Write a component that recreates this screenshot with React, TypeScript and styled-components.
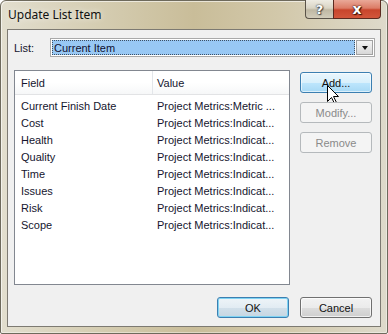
import React from 'react';
import styled, { createGlobalStyle, css } from 'styled-components';

const GlobalStyle = createGlobalStyle`
  * { box-sizing: border-box; }
  body {
    margin: 0;
    background: #ffffff;
    font-family: "Liberation Sans", Arial, sans-serif;
  }
`;

const uiFont = `"Liberation Sans", Arial, sans-serif`;

const Window = styled.div`
  width: 388px;
  height: 334px;
  display: flex;
  flex-direction: column;
  padding: 0 6px 6px 6px;
  border: 1px solid #6e6a5c;
  border-radius: 6px 6px 2px 2px;
  background: linear-gradient(90deg, #e2dece 0%, #d5cdb2 25%, #c9bd99 50%, #d2c8aa 72%, #dedacb 100%);
  box-shadow: inset 1px 1px 0 rgba(255, 255, 255, 0.6), inset -1px -1px 0 rgba(255, 255, 255, 0.4);
`;

const TitleBar = styled.div`
  height: 28px;
  display: flex;
  align-items: flex-start;
`;

const Title = styled.div`
  flex: 1;
  padding: 6px 0 0 1px;
  font-family: "Noto Sans", "Open Sans", sans-serif;
  font-size: 12px;
  line-height: 16px;
  color: #111;
  text-shadow: 0 0 6px rgba(255, 255, 255, 0.9);
`;

const CaptionButtons = styled.div`
  display: flex;
  margin-top: -1px;
  height: 19px;
`;

const CaptionButton = styled.div<{ $variant: 'help' | 'close' }>`
  height: 19px;
  display: flex;
  align-items: center;
  justify-content: center;
  font-family: "DejaVu Sans", sans-serif;
  font-weight: bold;
  color: #fff;
  border: 1px solid #5a5348;
  border-top: none;
  ${({ $variant }) =>
    $variant === 'help'
      ? css`
          width: 28px;
          font-size: 13px;
          border-radius: 0 0 0 4px;
          border-right: none;
          background: linear-gradient(180deg, #eeebe2 0%, #d9d4c4 45%, #bfb8a3 55%, #d2ccba 100%);
          text-shadow: 0 0 1px #333, 0 0 2px #444, 1px 1px 1px #555;
        `
      : css`
          width: 48px;
          font-size: 14px;
          border-radius: 0 0 4px 0;
          border-color: #5b2a20;
          background: linear-gradient(180deg, #e9a898 0%, #dc7c66 45%, #c8452c 55%, #d2563b 100%);
          text-shadow: 0 0 1px #3b1208, 0 0 2px #3b1208, 1px 1px 1px #3b1208;
        `}
`;

const Client = styled.div`
  flex: 1;
  display: flex;
  flex-direction: column;
  background: #f0f0f0;
  border: 1px solid #7d7a72;
  padding: 8px 8px 8px 6px;
  font-family: ${uiFont};
  font-size: 11px;
  color: #15152e;
`;

const ComboRow = styled.div`
  display: flex;
  align-items: center;
  height: 19px;
  margin-right: -3px;
`;

const Label = styled.div`
  width: 36px;
`;

const Combo = styled.div`
  flex: 1;
  height: 19px;
  display: flex;
  gap: 1px;
  padding: 1px;
  border: 1px solid #a9a9a9;
  background: #ffffff;
`;

const Selection = styled.div`
  flex: 1;
  display: flex;
  align-items: center;
  padding-left: 2px;
  background: #98c8f4;
  outline: 1px dotted #3d4f63;
  outline-offset: -1px;
  color: #101030;
`;

const ArrowButton = styled.div`
  width: 17px;
  display: flex;
  align-items: center;
  justify-content: center;
  border: 1px solid #a2a2a2;
  background: linear-gradient(180deg, #f4f4f4 0%, #e6e6e6 50%, #d8d8d8 100%);

  &::after {
    content: '';
    border-left: 3.5px solid transparent;
    border-right: 3.5px solid transparent;
    border-top: 4px solid #111;
  }
`;

const Middle = styled.div`
  display: flex;
  gap: 10px;
  margin-top: 13px;
  height: 215px;
`;

const ListView = styled.div`
  width: 276px;
  border: 1px solid #828790;
  background: #ffffff;
`;

const Header = styled.div`
  height: 24px;
  display: grid;
  grid-template-columns: 138px 1fr;
  background: linear-gradient(180deg, #ffffff 0%, #ffffff 50%, #f6f7f8 100%);
  border-bottom: 1px solid #e2e3e5;
`;

const HeaderCell = styled.div<{ $first?: boolean }>`
  display: flex;
  align-items: center;
  padding-left: ${({ $first }) => ($first ? '6px' : '4px')};
  border-right: ${({ $first }) => ($first ? '1px solid #e3e6ea' : 'none')};
`;

const Rows = styled.div`
  padding-top: 2px;
`;

const Row = styled.div`
  height: 17px;
  display: grid;
  grid-template-columns: 138px 1fr;
  align-items: center;
`;

const Cell = styled.div<{ $first?: boolean }>`
  padding-left: ${({ $first }) => ($first ? '6px' : '4px')};
  white-space: nowrap;
  overflow: hidden;
`;

const Side = styled.div`
  width: 72px;
  display: flex;
  flex-direction: column;
  gap: 9px;
  padding-top: 2px;
`;

type ButtonState = 'normal' | 'hover' | 'default' | 'disabled';

const Button = styled.div<{ $state?: ButtonState }>`
  position: relative;
  width: 72px;
  height: 21px;
  display: flex;
  align-items: center;
  justify-content: center;
  border-radius: 3px;
  font-family: ${uiFont};
  font-size: 11px;
  color: #111;
  ${({ $state = 'normal' }) => {
    switch ($state) {
      case 'hover':
        return css`
          border: 1px solid #3c7fb1;
          background: linear-gradient(180deg, #eaf6fd 0%, #d9f0fc 50%, #bee6fd 50%, #a7d9f5 100%);
          box-shadow: inset 0 0 0 1px rgba(255, 255, 255, 0.6);
        `;
      case 'default':
        return css`
          border: 1px solid #3c7fb1;
          background: linear-gradient(180deg, #eef4f8 0%, #e2ecf3 50%, #d2e0ea 50%, #c6d6e2 100%);
          box-shadow: inset 0 0 0 1px #7fd3f3;
        `;
      case 'disabled':
        return css`
          border: 1px solid #b5b9bc;
          background: #f4f4f4;
          color: #8a8a8a;
        `;
      default:
        return css`
          border: 1px solid #707070;
          background: linear-gradient(180deg, #f2f2f2 0%, #ebebeb 50%, #dddddd 50%, #cfcfcf 100%);
          box-shadow: inset 0 0 0 1px rgba(255, 255, 255, 0.7);
        `;
    }
  }}
`;

const Cursor = styled.svg`
  position: absolute;
  left: 26px;
  top: 12px;
  width: 12px;
  height: 19px;
  overflow: visible;
`;

const Footer = styled.div`
  display: flex;
  justify-content: flex-end;
  gap: 11px;
  margin-top: 12px;
`;

const items: [string, string][] = [
  ['Current Finish Date', 'Project Metrics:Metric ...'],
  ['Cost', 'Project Metrics:Indicat...'],
  ['Health', 'Project Metrics:Indicat...'],
  ['Quality', 'Project Metrics:Indicat...'],
  ['Time', 'Project Metrics:Indicat...'],
  ['Issues', 'Project Metrics:Indicat...'],
  ['Risk', 'Project Metrics:Indicat...'],
  ['Scope', 'Project Metrics:Indicat...'],
];

export default function App() {
  return (
    <>
      <GlobalStyle />
      <Window>
        <TitleBar>
          <Title>Update List Item</Title>
          <CaptionButtons>
            <CaptionButton $variant="help">?</CaptionButton>
            <CaptionButton $variant="close">x</CaptionButton>
          </CaptionButtons>
        </TitleBar>
        <Client>
          <ComboRow>
            <Label>List:</Label>
            <Combo>
              <Selection>Current Item</Selection>
              <ArrowButton />
            </Combo>
          </ComboRow>
          <Middle>
            <ListView>
              <Header>
                <HeaderCell $first>Field</HeaderCell>
                <HeaderCell>Value</HeaderCell>
              </Header>
              <Rows>
                {items.map(([field, value]) => (
                  <Row key={field}>
                    <Cell $first>{field}</Cell>
                    <Cell>{value}</Cell>
                  </Row>
                ))}
              </Rows>
            </ListView>
            <Side>
              <Button $state="hover">
                Add...
                <Cursor viewBox="0 0 12 19">
                  <path
                    d="M0.5 0.5 L0.5 16.5 L4.5 12.5 L7.5 18.5 L9.5 17.5 L6.5 11.5 L11.5 11.5 Z"
                    fill="#ffffff"
                    stroke="#000000"
                    strokeWidth="1"
                    strokeLinejoin="miter"
                  />
                </Cursor>
              </Button>
              <Button $state="disabled">Modify...</Button>
              <Button $state="disabled">Remove</Button>
            </Side>
          </Middle>
          <Footer>
            <Button $state="default">OK</Button>
            <Button>Cancel</Button>
          </Footer>
        </Client>
      </Window>
    </>
  );
}
